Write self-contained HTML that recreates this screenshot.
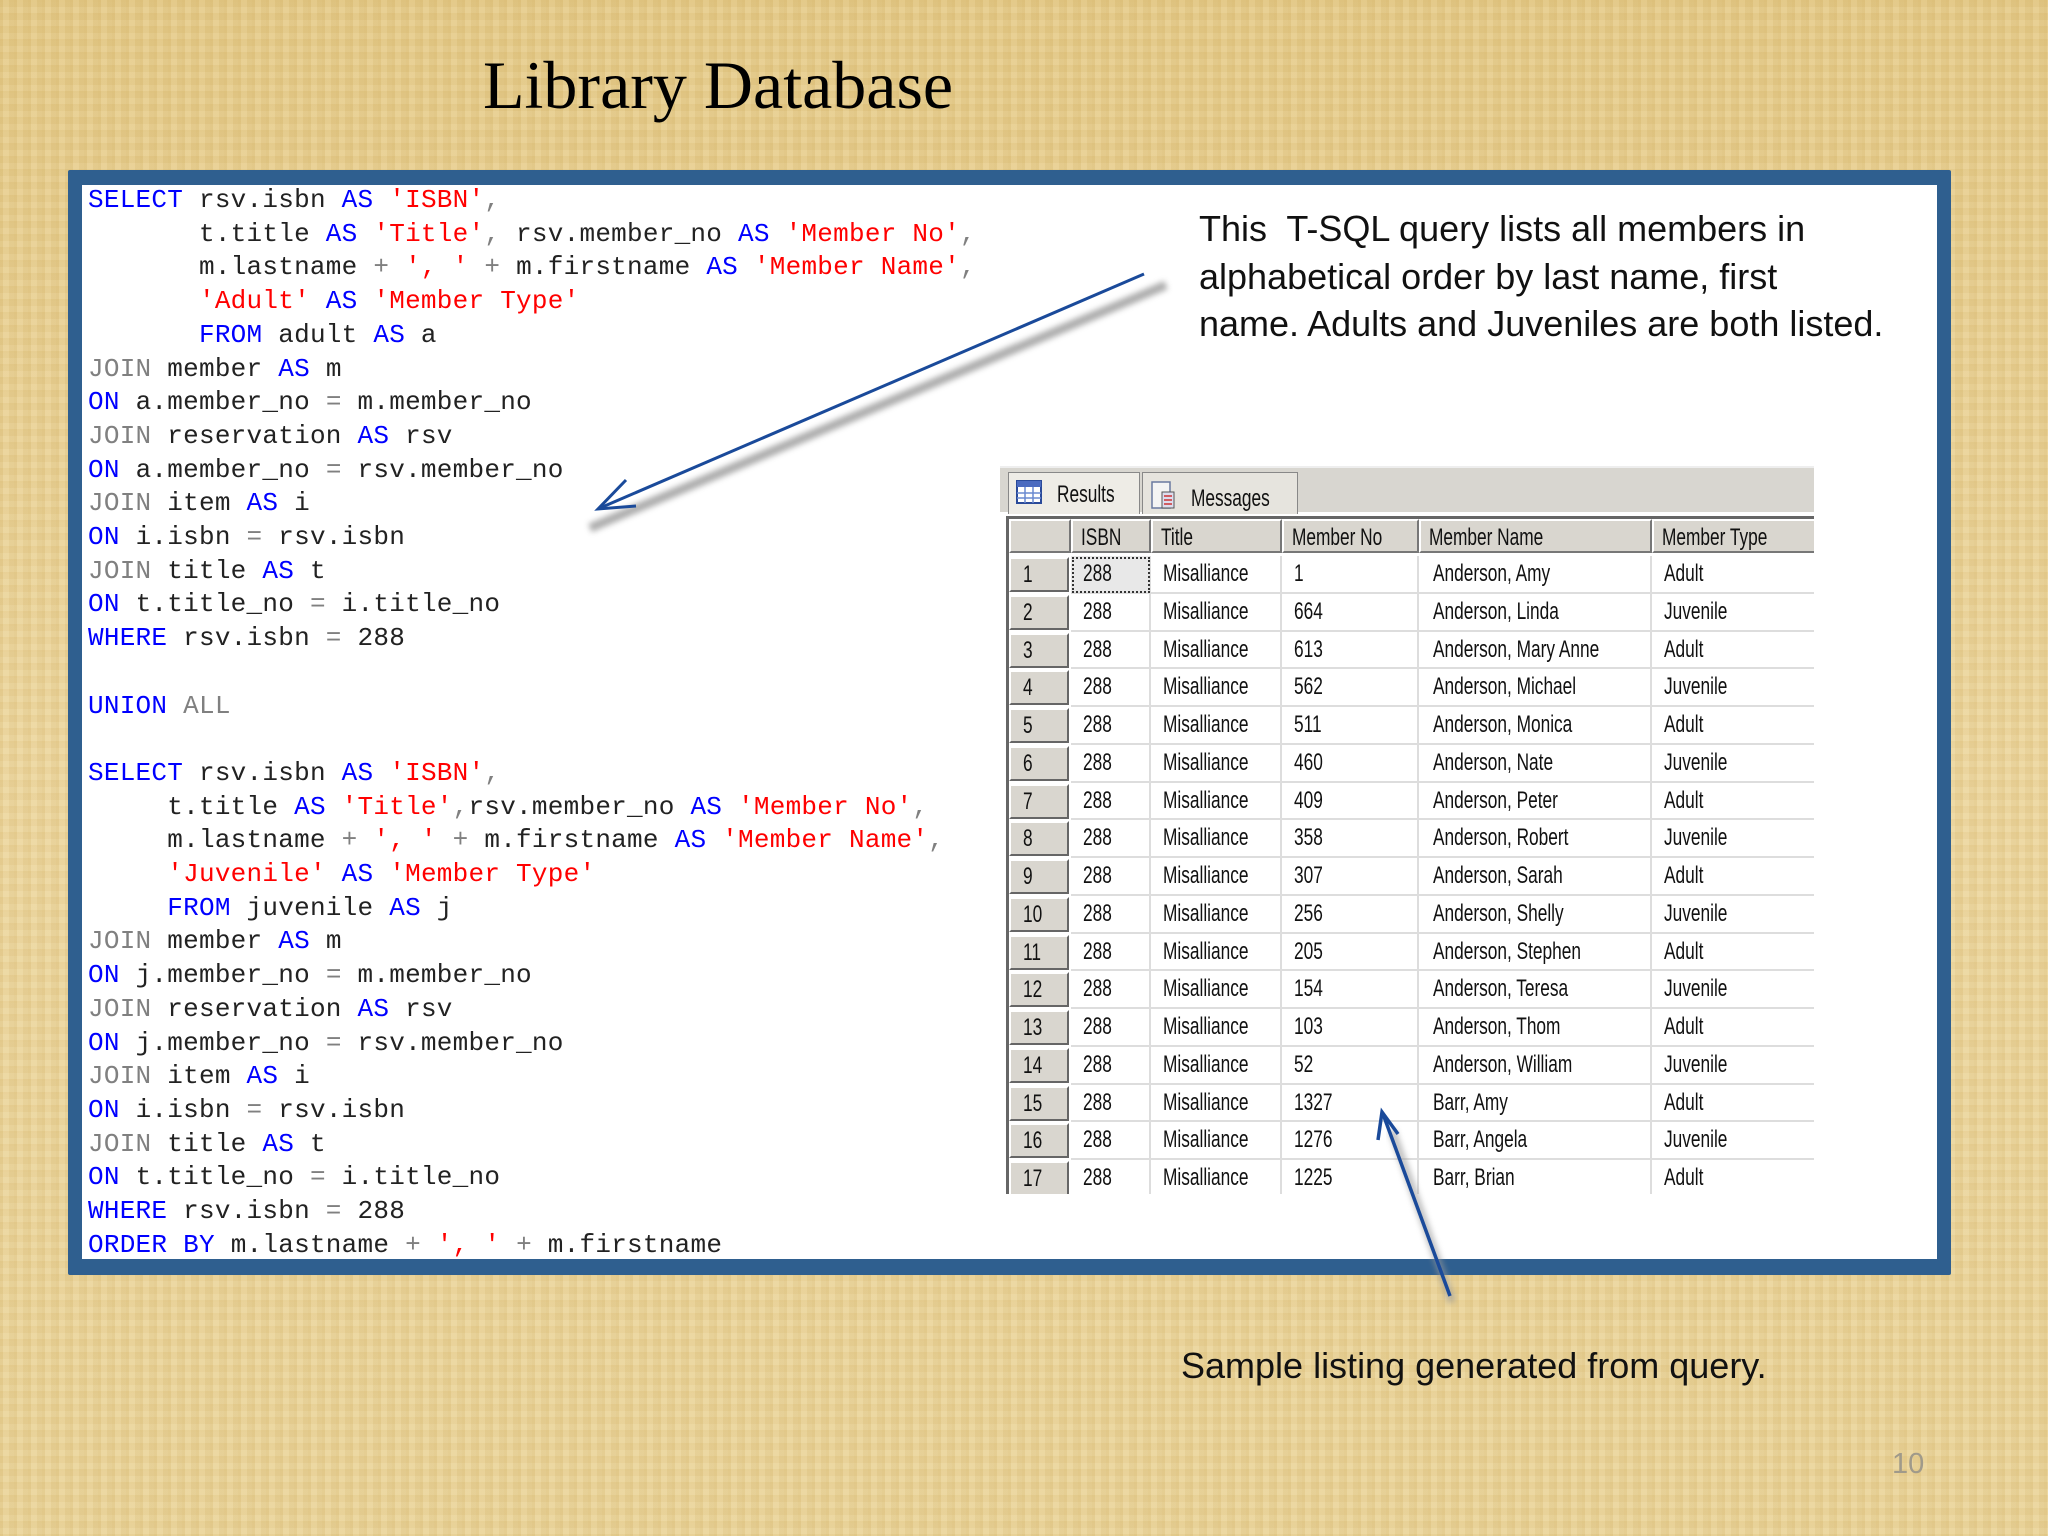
<!DOCTYPE html>
<html><head><meta charset="utf-8">
<style>
*{margin:0;padding:0;box-sizing:border-box}
html,body{width:2048px;height:1536px;overflow:hidden}
body{position:relative;background:#e9d297;
background-image:
repeating-linear-gradient(90deg,rgba(190,150,60,.12) 0 3px,rgba(255,240,200,.08) 3px 9px,rgba(180,140,50,.07) 9px 14px),
repeating-linear-gradient(0deg,rgba(200,160,70,.09) 0 2px,rgba(255,245,210,.07) 2px 8px,rgba(190,150,60,.06) 8px 13px),
linear-gradient(180deg,#e4ca8a,#ecd6a0 50%,#e9d39a);}
.title{position:absolute;left:483px;top:46px;font:68px "Liberation Serif",serif;color:#000}
.frame{position:absolute;left:68px;top:170px;width:1883px;height:1105px;background:#2f5f8f;border-radius:2px}
.inner{position:absolute;left:82px;top:185px;width:1855px;height:1074px;background:#fff}
pre{position:absolute;left:88px;top:184px;font:26px/33.7px "Liberation Mono",monospace;color:#222;letter-spacing:0.25px}
.k{color:#0000ff}.s{color:#ff0000}.g{color:#808080}
.desc{position:absolute;left:1199px;top:205px;font:36px/47.5px "Liberation Sans",sans-serif;color:#111}
.sample{position:absolute;left:1181px;top:1345px;font:36px "Liberation Sans",sans-serif;color:#111}
.pn{position:absolute;left:1892px;top:1448px;font:29px "Liberation Sans",sans-serif;color:#a09a8a}
.grid{position:absolute;left:1000px;top:466px;width:814px;height:728px;background:#fff;font:24px "Liberation Sans",sans-serif;color:#111;overflow:hidden}
.grid i{font-style:normal;display:inline-block;transform:scaleX(.72);transform-origin:left center;white-space:nowrap}
.tabs{position:absolute;left:0;top:0;width:814px;height:46px;background:#d8d6d0;border-top:2px solid #eee}
.tab{position:absolute;top:4px;height:42px;border:1px solid #888;border-bottom:none;background:#e6e4de;padding:8px 0 0 48px}
.gbody{position:absolute;left:6px;top:50px;width:808px;height:678px;border-left:3px solid #666;border-top:3px solid #666}
.hdr{position:absolute;top:0;height:34px;background:#d9d6cf;border:2px solid;border-color:#fff #777 #777 #fff;padding:3px 0 0 8px;white-space:nowrap}
.rh{position:absolute;left:0;width:60px;height:35px;background:#d9d6cf;border:2px solid;border-color:#fff #666 #666 #fff;padding:2px 0 0 12px}
.c{position:absolute;height:37.75px;padding:4px 0 0 12px;border-right:2px solid #ddd;border-bottom:2px solid #ddd;white-space:nowrap}
</style></head><body>
<div class="title">Library Database</div>
<div class="frame"></div>
<div class="inner"></div>
<pre><span class="k">SELECT</span> rsv.isbn <span class="k">AS</span> <span class="s">'ISBN'</span><span class="g">,</span>
       t.title <span class="k">AS</span> <span class="s">'Title'</span><span class="g">,</span> rsv.member_no <span class="k">AS</span> <span class="s">'Member No'</span><span class="g">,</span>
       m.lastname <span class="g">+</span> <span class="s">', '</span> <span class="g">+</span> m.firstname <span class="k">AS</span> <span class="s">'Member Name'</span><span class="g">,</span>
       <span class="s">'Adult'</span> <span class="k">AS</span> <span class="s">'Member Type'</span>
       <span class="k">FROM</span> adult <span class="k">AS</span> a
<span class="g">JOIN</span> member <span class="k">AS</span> m
<span class="k">ON</span> a.member_no <span class="g">=</span> m.member_no
<span class="g">JOIN</span> reservation <span class="k">AS</span> rsv
<span class="k">ON</span> a.member_no <span class="g">=</span> rsv.member_no
<span class="g">JOIN</span> item <span class="k">AS</span> i
<span class="k">ON</span> i.isbn <span class="g">=</span> rsv.isbn
<span class="g">JOIN</span> title <span class="k">AS</span> t
<span class="k">ON</span> t.title_no <span class="g">=</span> i.title_no
<span class="k">WHERE</span> rsv.isbn <span class="g">=</span> 288

<span class="k">UNION</span> <span class="g">ALL</span>

<span class="k">SELECT</span> rsv.isbn <span class="k">AS</span> <span class="s">'ISBN'</span><span class="g">,</span>
     t.title <span class="k">AS</span> <span class="s">'Title'</span><span class="g">,</span>rsv.member_no <span class="k">AS</span> <span class="s">'Member No'</span><span class="g">,</span>
     m.lastname <span class="g">+</span> <span class="s">', '</span> <span class="g">+</span> m.firstname <span class="k">AS</span> <span class="s">'Member Name'</span><span class="g">,</span>
     <span class="s">'Juvenile'</span> <span class="k">AS</span> <span class="s">'Member Type'</span>
     <span class="k">FROM</span> juvenile <span class="k">AS</span> j
<span class="g">JOIN</span> member <span class="k">AS</span> m
<span class="k">ON</span> j.member_no <span class="g">=</span> m.member_no
<span class="g">JOIN</span> reservation <span class="k">AS</span> rsv
<span class="k">ON</span> j.member_no <span class="g">=</span> rsv.member_no
<span class="g">JOIN</span> item <span class="k">AS</span> i
<span class="k">ON</span> i.isbn <span class="g">=</span> rsv.isbn
<span class="g">JOIN</span> title <span class="k">AS</span> t
<span class="k">ON</span> t.title_no <span class="g">=</span> i.title_no
<span class="k">WHERE</span> rsv.isbn <span class="g">=</span> 288
<span class="k">ORDER</span> <span class="k">BY</span> m.lastname <span class="g">+</span> <span class="s">', '</span> <span class="g">+</span> m.firstname</pre>

<div class="desc">This&nbsp; T-SQL query lists all members in<br>alphabetical order by last name, first<br>name. Adults and Juveniles are both listed.</div>

<div class="grid">
 <div class="tabs">
  <div class="tab" style="left:8px;width:132px;background:#eeece6"><i>Results</i></div>
  <svg style="position:absolute;left:16px;top:12px" width="26" height="24"><rect x="1" y="1" width="24" height="22" fill="#fff" stroke="#2a4a9a" stroke-width="2"/><rect x="1" y="1" width="24" height="6" fill="#4a6ac0"/><path d="M9 7V23M17 7V23M1 13H25M1 18H25" stroke="#6a8ad0" stroke-width="1.5"/></svg>
  <div class="tab" style="left:142px;width:156px;padding-top:12px"><i>Messages</i></div>
  <svg style="position:absolute;left:150px;top:12px" width="26" height="30"><rect x="2" y="2" width="18" height="26" fill="#f4f4f4" stroke="#6a7aa0" stroke-width="1.5"/><rect x="12" y="12" width="12" height="16" fill="#dde" stroke="#555" stroke-width="1"/><path d="M14 16h8M14 20h8M14 24h8" stroke="#c33" stroke-width="1.5"/></svg>
 </div>
 <div class="gbody">
  <div class="hdr" style="left:0;width:62px"></div>
  <div class="hdr" style="left:62px;width:80px"><i>ISBN</i></div>
  <div class="hdr" style="left:142px;width:131px"><i>Title</i></div>
  <div class="hdr" style="left:273px;width:137px"><i>Member No</i></div>
  <div class="hdr" style="left:410px;width:233px"><i>Member Name</i></div>
  <div class="hdr" style="left:643px;width:170px"><i>Member Type</i></div>
  <div id="rows"></div>
 </div>
</div>
<script>
var d=[["1","Anderson, Amy","Adult"],["664","Anderson, Linda","Juvenile"],["613","Anderson, Mary Anne","Adult"],["562","Anderson, Michael","Juvenile"],["511","Anderson, Monica","Adult"],["460","Anderson, Nate","Juvenile"],["409","Anderson, Peter","Adult"],["358","Anderson, Robert","Juvenile"],["307","Anderson, Sarah","Adult"],["256","Anderson, Shelly","Juvenile"],["205","Anderson, Stephen","Adult"],["154","Anderson, Teresa","Juvenile"],["103","Anderson, Thom","Adult"],["52","Anderson, William","Juvenile"],["1327","Barr, Amy","Adult"],["1276","Barr, Angela","Juvenile"],["1225","Barr, Brian","Adult"]];
var h="";
for(var i=0;i<d.length;i++){var t=37+i*37.75;
h+='<div class="rh" style="top:'+(t+1)+'px"><i>'+(i+1)+'</i></div>';
h+='<div class="c" style="left:62px;width:80px;top:'+t+'px;'+(i==0?'background:#e8e8e8;outline:2px dotted #333;outline-offset:-3px;':'')+'"><i>288</i></div>';
h+='<div class="c" style="left:142px;width:131px;top:'+t+'px"><i>Misalliance</i></div>';
h+='<div class="c" style="left:273px;width:137px;top:'+t+'px"><i>'+d[i][0]+'</i></div>';
h+='<div class="c" style="left:410px;width:233px;top:'+t+'px;padding-left:14px"><i>'+d[i][1]+'</i></div>';
h+='<div class="c" style="left:643px;width:170px;top:'+t+'px;border-right:none"><i>'+d[i][2]+'</i></div>';}
document.getElementById("rows").innerHTML=h;
</script>

<svg style="position:absolute;left:0;top:0" width="2048" height="1536">
 <defs><filter id="b"><feGaussianBlur stdDeviation="3"/></filter></defs>
 <line x1="1166" y1="285" x2="590" y2="528" stroke="#999" stroke-width="9" filter="url(#b)" opacity=".8"/>
 <line x1="1144" y1="274" x2="600" y2="508" stroke="#1a4a9a" stroke-width="3"/>
 <path d="M626 480L598 509L636 506" fill="none" stroke="#1a4a9a" stroke-width="3"/>
 <line x1="1452" y1="1302" x2="1392" y2="1130" stroke="#999" stroke-width="8" filter="url(#b)" opacity=".6"/>
 <line x1="1450" y1="1296" x2="1383" y2="1114" stroke="#1a4a9a" stroke-width="3.5"/>
 <path d="M1378 1140L1382 1112L1398 1134" fill="none" stroke="#1a4a9a" stroke-width="3.5"/>
</svg>

<div class="sample">Sample listing generated from query.</div>
<div class="pn">10</div>
</body></html>
